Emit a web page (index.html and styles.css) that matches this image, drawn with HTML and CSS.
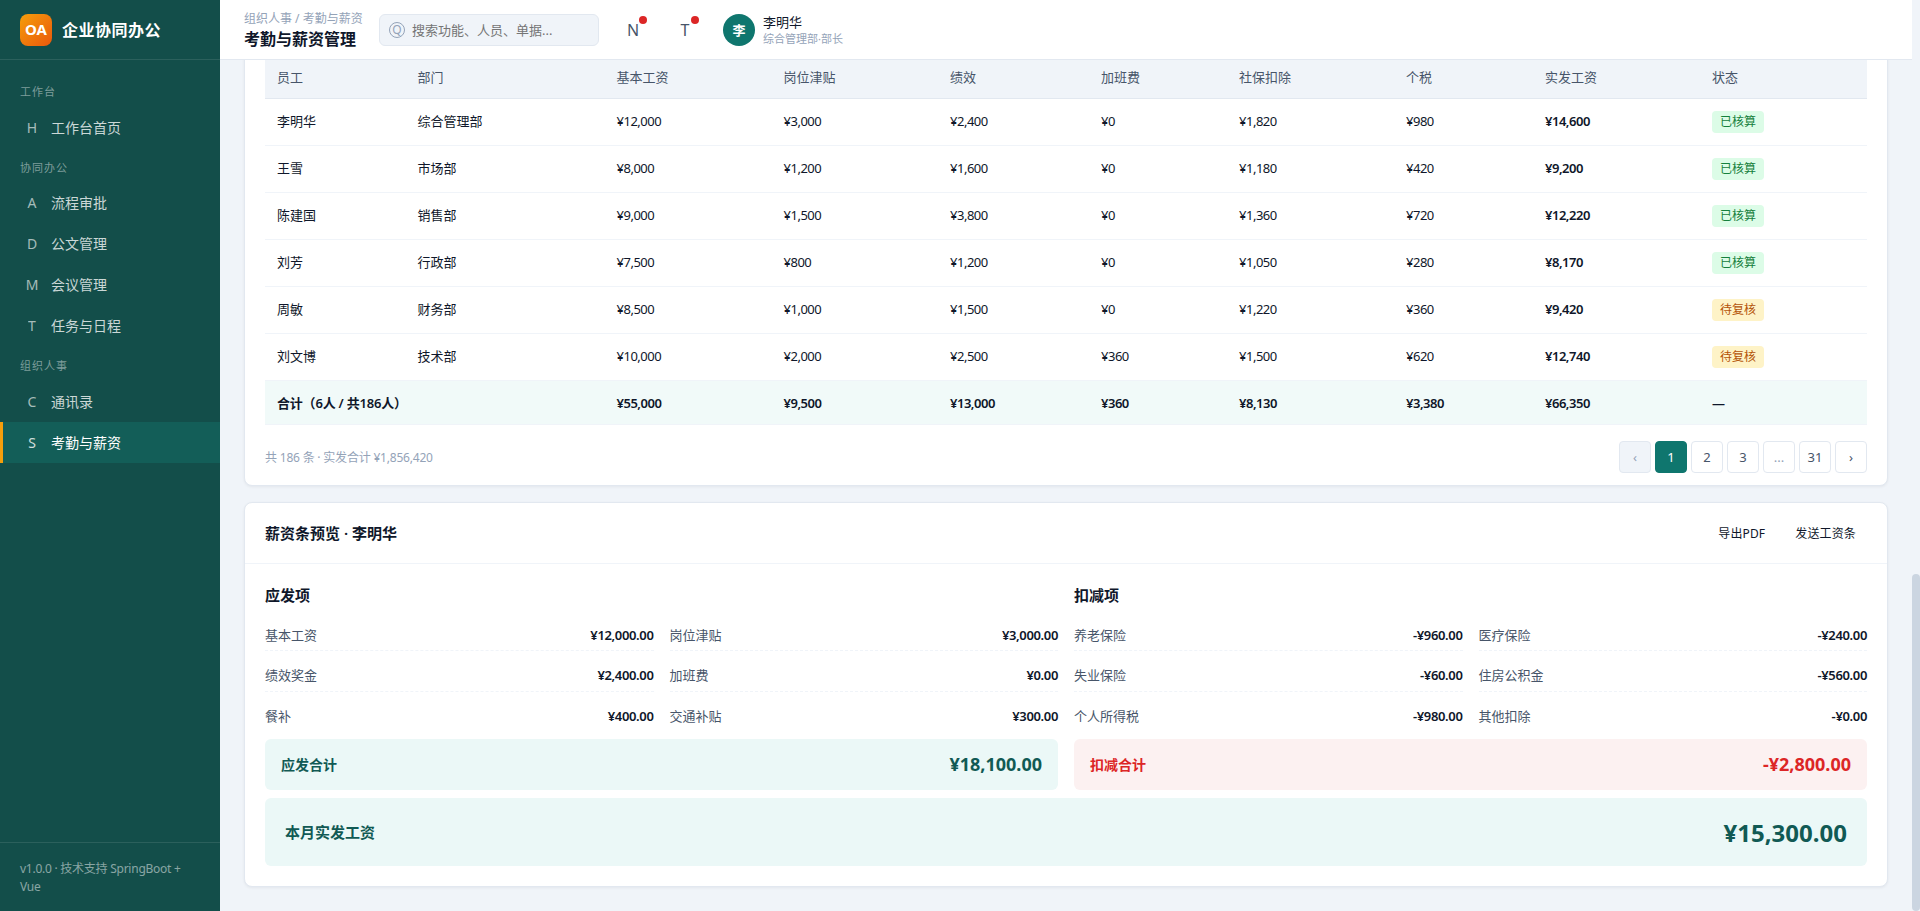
FILE: index.html
```html
<!DOCTYPE html>
<html lang="zh-CN">
  <head>
    <meta charset="UTF-8" />
    <meta name="viewport" content="width=device-width, initial-scale=1.0" />
    <link rel="stylesheet" href="styles.css">
    <title>企业协同办公</title>
  </head>
  <body>
    <div class="app">
      <aside class="sidebar">
        <div class="logo">
          <span class="logo-icon">OA</span>
          <span class="logo-text">企业协同办公</span>
        </div>
        <nav class="nav">
          <div class="nav-title">工作台</div>
          <a class="nav-item"><i>H</i>工作台首页</a>
          <div class="nav-title">协同办公</div>
          <a class="nav-item"><i>A</i>流程审批</a>
          <a class="nav-item"><i>D</i>公文管理</a>
          <a class="nav-item"><i>M</i>会议管理</a>
          <a class="nav-item"><i>T</i>任务与日程</a>
          <div class="nav-title">组织人事</div>
          <a class="nav-item"><i>C</i>通讯录</a>
          <a class="nav-item active"><i>S</i>考勤与薪资</a>
        </nav>
        <div class="sidebar-footer">v1.0.0 · 技术支持 SpringBoot + Vue</div>
      </aside>

      <main class="main">
        <header class="topbar">
          <div class="page-info">
            <div class="breadcrumb">组织人事 / 考勤与薪资</div>
            <div class="page-title">考勤与薪资管理</div>
          </div>
          <div class="search">
            <span class="search-icon">Q</span>
            <input type="text" placeholder="搜索功能、人员、单据..." />
          </div>
          <div class="icon-btn">N<span class="dot"></span></div>
          <div class="icon-btn">T<span class="dot"></span></div>
          <div class="user">
            <div class="avatar">李</div>
            <div>
              <div class="user-name">李明华</div>
              <div class="user-role">综合管理部·部长</div>
            </div>
          </div>
        </header>

        <div class="content">
          <!-- 薪资核算表 -->
          <section class="card">
            <div class="card-body table-body">
              <table class="table">
                <colgroup>
                  <col class="c-name"><col class="c-dept"><col class="c-base"><col class="c-post"><col class="c-perf">
                  <col class="c-over"><col class="c-social"><col class="c-tax"><col class="c-real"><col class="c-status">
                </colgroup>
                <thead>
                  <tr><th>员工</th><th>部门</th><th>基本工资</th><th>岗位津贴</th><th>绩效</th><th>加班费</th><th>社保扣除</th><th>个税</th><th>实发工资</th><th>状态</th></tr>
                </thead>
                <tbody>
                  <tr>
                    <td>李明华</td><td>综合管理部</td><td class="num">¥12,000</td><td class="num">¥3,000</td><td class="num">¥2,400</td><td class="num">¥0</td><td class="num">¥1,820</td><td class="num">¥980</td><td class="num strong">¥14,600</td>
                    <td><span class="tag tag-success">已核算</span></td>
                  </tr>
                  <tr>
                    <td>王雪</td><td>市场部</td><td class="num">¥8,000</td><td class="num">¥1,200</td><td class="num">¥1,600</td><td class="num">¥0</td><td class="num">¥1,180</td><td class="num">¥420</td><td class="num strong">¥9,200</td>
                    <td><span class="tag tag-success">已核算</span></td>
                  </tr>
                  <tr>
                    <td>陈建国</td><td>销售部</td><td class="num">¥9,000</td><td class="num">¥1,500</td><td class="num">¥3,800</td><td class="num">¥0</td><td class="num">¥1,360</td><td class="num">¥720</td><td class="num strong">¥12,220</td>
                    <td><span class="tag tag-success">已核算</span></td>
                  </tr>
                  <tr>
                    <td>刘芳</td><td>行政部</td><td class="num">¥7,500</td><td class="num">¥800</td><td class="num">¥1,200</td><td class="num">¥0</td><td class="num">¥1,050</td><td class="num">¥280</td><td class="num strong">¥8,170</td>
                    <td><span class="tag tag-success">已核算</span></td>
                  </tr>
                  <tr>
                    <td>周敏</td><td>财务部</td><td class="num">¥8,500</td><td class="num">¥1,000</td><td class="num">¥1,500</td><td class="num">¥0</td><td class="num">¥1,220</td><td class="num">¥360</td><td class="num strong">¥9,420</td>
                    <td><span class="tag tag-warning">待复核</span></td>
                  </tr>
                  <tr>
                    <td>刘文博</td><td>技术部</td><td class="num">¥10,000</td><td class="num">¥2,000</td><td class="num">¥2,500</td><td class="num">¥360</td><td class="num">¥1,500</td><td class="num">¥620</td><td class="num strong">¥12,740</td>
                    <td><span class="tag tag-warning">待复核</span></td>
                  </tr>
                  <tr class="total-row">
                    <td colspan="2" class="total-name">合计（6人 / 共186人）</td><td class="num">¥55,000</td><td class="num">¥9,500</td><td class="num">¥13,000</td><td class="num">¥360</td><td class="num">¥8,130</td><td class="num">¥3,380</td><td class="num">¥66,350</td><td>—</td>
                  </tr>
                </tbody>
              </table>
              <div class="pagination">
                <span class="page-total">共 186 条 · 实发合计 ¥1,856,420</span>
                <div class="pages">
                  <button class="page disabled">‹</button>
                  <button class="page current">1</button>
                  <button class="page">2</button>
                  <button class="page">3</button>
                  <button class="page more">...</button>
                  <button class="page">31</button>
                  <button class="page">›</button>
                </div>
              </div>
            </div>
          </section>

          <!-- 薪资条 -->
          <section class="card">
            <div class="card-header">
              <h3>薪资条预览 · 李明华</h3>
              <div class="actions">
                <button class="btn-text">导出PDF</button>
                <button class="btn-text">发送工资条</button>
              </div>
            </div>
            <div class="card-body">
              <div class="slip">
                <div>
                  <h4>应发项</h4>
                  <div class="slip-grid">
                    <div class="slip-item"><span>基本工资</span><b>¥12,000.00</b></div>
                    <div class="slip-item"><span>岗位津贴</span><b>¥3,000.00</b></div>
                    <div class="slip-item"><span>绩效奖金</span><b>¥2,400.00</b></div>
                    <div class="slip-item"><span>加班费</span><b>¥0.00</b></div>
                    <div class="slip-item last"><span>餐补</span><b>¥400.00</b></div>
                    <div class="slip-item last"><span>交通补贴</span><b>¥300.00</b></div>
                  </div>
                  <div class="sum"><span>应发合计</span><strong>¥18,100.00</strong></div>
                </div>
                <div>
                  <h4>扣减项</h4>
                  <div class="slip-grid">
                    <div class="slip-item"><span>养老保险</span><b>-¥960.00</b></div>
                    <div class="slip-item"><span>医疗保险</span><b>-¥240.00</b></div>
                    <div class="slip-item"><span>失业保险</span><b>-¥60.00</b></div>
                    <div class="slip-item"><span>住房公积金</span><b>-¥560.00</b></div>
                    <div class="slip-item last"><span>个人所得税</span><b>-¥980.00</b></div>
                    <div class="slip-item last"><span>其他扣除</span><b>-¥0.00</b></div>
                  </div>
                  <div class="sum minus"><span>扣减合计</span><strong>-¥2,800.00</strong></div>
                </div>
              </div>
              <div class="net"><span>本月实发工资</span><strong>¥15,300.00</strong></div>
            </div>
          </section>
        </div>
      </main>

      <div class="scrollbar"><div class="thumb"></div></div>
    </div>
  </body>
</html>
```
FILE: styles.css
```css
* {
  margin: 0;
  padding: 0;
  box-sizing: border-box;
}
body {
  font-family: "Noto Sans", "Noto Sans CJK SC", sans-serif;
  font-size: 14px;
  line-height: 1.5;
  color: #0f172a;
  background-color: #f0f4f9;
}
button,
input {
  font-family: inherit;
}
.app {
  display: flex;
  height: 100vh;
  overflow: hidden;
}

/* sidebar */
.sidebar {
  display: flex;
  flex-direction: column;
  width: 220px;
  flex-shrink: 0;
  background-color: #134e4a;
  color: #fff;
}
.logo {
  display: flex;
  align-items: center;
  gap: 10px;
  height: 60px;
  padding: 0 20px;
  border-bottom: 1px solid rgba(255, 255, 255, 0.1);
}
.logo-icon {
  display: flex;
  align-items: center;
  justify-content: center;
  width: 32px;
  height: 32px;
  border-radius: 8px;
  font-size: 15px;
  font-weight: 700;
  background: linear-gradient(135deg, #f59e0b, #ea580c);
}
.logo-text {
  font-size: 16px;
  font-weight: 600;
  letter-spacing: 0.5px;
}
.nav {
  flex: 1;
  padding-top: 12px;
}
.nav-title {
  padding: 12px 20px 6px;
  font-size: 11px;
  letter-spacing: 1px;
  color: rgba(255, 255, 255, 0.45);
}
.nav-item {
  display: flex;
  align-items: center;
  gap: 10px;
  height: 41px;
  padding: 0 20px;
  border-left: 3px solid transparent;
  color: rgba(255, 255, 255, 0.78);
}
.nav-item i {
  width: 18px;
  text-align: center;
  font-style: normal;
  opacity: 0.8;
}
.nav-item.active {
  color: #fff;
  background-color: #135e58;
  border-left-color: #f59e0b;
}
.sidebar-footer {
  padding: 17px 20px 15px;
  font-size: 12px;
  letter-spacing: -0.25px;
  color: rgba(255, 255, 255, 0.5);
  border-top: 1px solid rgba(255, 255, 255, 0.1);
}

/* topbar */
.main {
  display: flex;
  flex-direction: column;
  flex: 1;
  min-width: 0;
}
.topbar {
  display: flex;
  align-items: center;
  gap: 16px;
  height: 60px;
  flex-shrink: 0;
  padding: 0 24px;
  background-color: #fff;
  border-bottom: 1px solid #e2e8f0;
}
.page-info {
  width: 119px;
  white-space: nowrap;
}
.breadcrumb {
  font-size: 12px;
  color: #94a3b8;
}
.page-title {
  font-size: 16px;
  font-weight: 600;
  line-height: 22px;
}
.search {
  display: flex;
  align-items: center;
  gap: 7px;
  width: 220px;
  height: 32px;
  padding: 0 9px;
  border: 1px solid #e2e8f0;
  border-radius: 6px;
  background-color: #f0f4f9;
}
.search-icon {
  display: flex;
  align-items: center;
  justify-content: center;
  width: 16px;
  height: 16px;
  flex-shrink: 0;
  border: 1px solid #94a3b8;
  border-radius: 50%;
  font-size: 12px;
  line-height: 14px;
  color: #94a3b8;
}
.search input {
  width: 100%;
  border: none;
  outline: none;
  background: none;
  font-size: 13px;
}
.search input::placeholder {
  color: #757575;
}
.icon-btn {
  position: relative;
  width: 36px;
  height: 36px;
  line-height: 36px;
  text-align: center;
  font-size: 16px;
  color: #475569;
}
.dot {
  position: absolute;
  top: 4px;
  right: 4px;
  width: 8px;
  height: 8px;
  border-radius: 50%;
  background-color: #dc2626;
}
.user {
  display: flex;
  align-items: center;
  gap: 8px;
  padding: 0 4px;
}
.avatar {
  width: 32px;
  height: 32px;
  border-radius: 50%;
  line-height: 32px;
  text-align: center;
  font-size: 13px;
  font-weight: 600;
  color: #fff;
  background-color: #0f766e;
}
.user-name {
  padding-top: 1px;
  font-size: 13px;
  line-height: 17px;
}
.user-role {
  font-size: 11px;
  line-height: 16px;
  color: #94a3b8;
}

/* content, scrolled to the end */
.content {
  display: flex;
  flex-direction: column;
  justify-content: flex-end;
  flex: 1;
  min-height: 0;
  gap: 16px;
  padding: 0 24px 24px;
  overflow: hidden;
}
.card {
  flex-shrink: 0;
  background-color: #fff;
  border: 1px solid #e2e8f0;
  border-radius: 8px;
  box-shadow: 0 1px 3px rgba(15, 23, 42, 0.06);
}
.card-body {
  padding: 20px;
}
.table-body {
  padding-bottom: 12px;
}
.card-header {
  display: flex;
  align-items: center;
  justify-content: space-between;
  height: 61px;
  padding: 0 20px;
  border-bottom: 1px solid #f0f4f9;
}
.card-header h3 {
  font-size: 15px;
  font-weight: 600;
}
.actions {
  display: flex;
  gap: 8px;
}
.btn-text {
  height: 28px;
  padding: 0 11px;
  border: none;
  background: none;
  font-size: 12px;
  letter-spacing: 0.15px;
  color: #0f172a;
}

/* table */
.table {
  width: 100%;
  table-layout: fixed;
  border-collapse: separate;
  border-spacing: 0;
  font-size: 13px;
}
.c-name { width: 140.5px; }
.c-dept { width: 199px; }
.c-base { width: 167px; }
.c-post { width: 166.5px; }
.c-perf { width: 151px; }
.c-over { width: 138px; }
.c-social { width: 167px; }
.c-tax { width: 139px; }
.c-real, .c-status { width: 167px; }
.table th {
  padding: 10px 12px;
  text-align: left;
  font-weight: 400;
  color: #475569;
  background-color: #f0f4f9;
  border-bottom: 1px solid #e2e8f0;
}
.table td {
  padding: 12px;
  border-bottom: 1px solid #f0f4f9;
}
.table .num {
  letter-spacing: -0.48px;
}
.table .strong,
.total-row td {
  font-weight: 600;
}
.table .total-row td {
  padding: 13px 12px 11px;
  background-color: #f1faf9;
}
.total-row .total-name {
  letter-spacing: -0.2px;
}
.tag {
  display: block;
  width: 52px;
  padding: 2px 8px;
  border-radius: 4px;
  font-size: 12px;
  white-space: nowrap;
}
.tag-success {
  color: #15803d;
  background-color: #dcfce7;
}
.tag-warning {
  color: #b45309;
  background-color: #fef3c7;
}
.pagination {
  display: flex;
  align-items: center;
  justify-content: space-between;
  margin-top: 16px;
}
.page-total {
  padding-top: 2px;
  font-size: 12px;
  letter-spacing: -0.2px;
  color: #94a3b8;
}
.pages {
  display: flex;
  gap: 4px;
}
.page {
  width: 32px;
  height: 32px;
  border: 1px solid #e2e8f0;
  border-radius: 4px;
  font-size: 13px;
  color: #475569;
  background-color: #fff;
}
.page.more {
  color: #94a3b8;
}
.page.disabled {
  color: #94a3b8;
  background-color: #f0f4f9;
}
.page.current {
  color: #fff;
  background-color: #0f766e;
  border-color: #0f766e;
}

/* salary slip */
.slip {
  display: grid;
  grid-template-columns: 1fr 1fr;
  gap: 16px;
}
.slip h4 {
  margin-bottom: 12px;
  font-size: 15px;
  font-weight: 600;
}
.slip-grid {
  display: grid;
  grid-template-columns: 1fr 1fr;
  gap: 8px 16px;
}
.slip-item {
  display: flex;
  justify-content: space-between;
  padding: 7px 0 5px;
  font-size: 13px;
  border-bottom: 1px dashed #f0f4f9;
}
.slip-item.last {
  border-bottom: none;
}
.slip-item span {
  color: #475569;
}
.slip-item b {
  font-weight: 600;
  letter-spacing: -0.35px;
}
.sum,
.net {
  display: flex;
  align-items: center;
  justify-content: space-between;
  margin-top: 8px;
  border-radius: 6px;
  font-weight: 600;
  color: #115a54;
  background-color: #ebf8f7;
}
.sum {
  padding: 12px 16px;
  font-size: 14px;
}
.sum strong {
  font-size: 18px;
  font-weight: 700;
}
.sum.minus {
  color: #dc2626;
  background-color: #fcf1f1;
}
.net {
  padding: 16px 20px;
  font-size: 15px;
}
.net strong {
  padding-top: 1px;
  font-size: 24px;
  line-height: 35px;
  font-weight: 700;
}

/* scrollbar */
.scrollbar {
  display: flex;
  flex-direction: column;
  justify-content: flex-end;
  width: 8px;
  flex-shrink: 0;
}
.thumb {
  height: 337px;
  border-radius: 4px;
  background-color: #cbd5e1;
}
```
